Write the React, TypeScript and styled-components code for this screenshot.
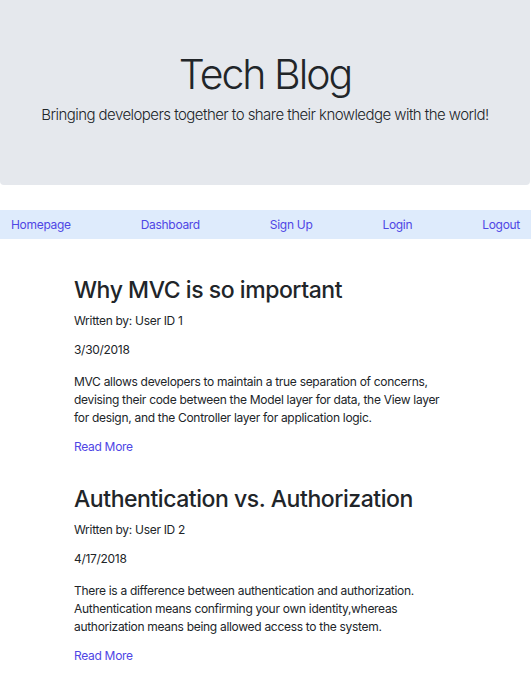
import React from "react";
import styled, { createGlobalStyle } from "styled-components";

const Global = createGlobalStyle`
  body {
    margin: 0;
    background: #ffffff;
    font-family: Inter, "Noto Sans", sans-serif;
    color: #212529;
  }
`;

const Jumbotron = styled.header`
  height: 185px;
  box-sizing: border-box;
  background: #e5e8ed;
  border-radius: 0 0 4px 4px;
  margin-right: 1px;
  display: flex;
  flex-direction: column;
  align-items: center;
  padding-top: 50px;
`;

const Title = styled.h1`
  margin: 0;
  font-size: 41px;
  font-weight: 300;
  line-height: 48px;
  letter-spacing: -2px;
  color: #212529;
`;

const Lead = styled.p`
  margin: 6px 0 0;
  font-size: 15px;
  font-weight: 300;
  line-height: 22px;
  letter-spacing: -0.55px;
  color: #212529;
`;

const Nav = styled.nav`
  margin-top: 25px;
  height: 29px;
  background: #deebfc;
  display: flex;
  align-items: center;
  justify-content: space-between;
  padding: 0 11px;
`;

const NavLink = styled.a`
  font-size: 12px;
  letter-spacing: -0.3px;
  color: #4f46e5;
  text-decoration: none;
`;

const Main = styled.main`
  width: 383px;
  margin: 0 auto;
  padding-top: 37px;
`;

const Post = styled.article`
  margin-bottom: 29px;
`;

const PostTitle = styled.h2`
  margin: 0 0 7px;
  font-size: 23px;
  font-weight: 500;
  line-height: 29px;
  letter-spacing: -0.45px;
`;

const Meta = styled.p<{ $gap: number }>`
  margin: 0 0 ${(p) => p.$gap}px;
  font-size: 12px;
  letter-spacing: -0.3px;
  line-height: 18px;
`;

const Body = styled.p`
  max-width: 372px;
  margin: 0 0 11px;
  font-size: 12px;
  letter-spacing: -0.3px;
  line-height: 18px;
`;

const ReadMore = styled.a`
  display: block;
  font-size: 12px;
  letter-spacing: -0.3px;
  line-height: 18px;
  color: #4f46e5;
  text-decoration: none;
`;

const posts = [
  {
    title: "Why MVC is so important",
    user: 1,
    date: "3/30/2018",
    body: "MVC allows developers to maintain a true separation of concerns, devising their code between the Model layer for data, the View layer for design, and the Controller layer for application logic.",
  },
  {
    title: "Authentication vs. Authorization",
    user: 2,
    date: "4/17/2018",
    body: "There is a difference between authentication and authorization. Authentication means confirming your own identity,whereas authorization means being allowed access to the system.",
  },
];

export default function App() {
  return (
    <>
      <Global />
      <Jumbotron>
        <Title>Tech Blog</Title>
        <Lead>Bringing developers together to share their knowledge with the world!</Lead>
      </Jumbotron>
      <Nav>
        <NavLink href="#">Homepage</NavLink>
        <NavLink href="#">Dashboard</NavLink>
        <NavLink href="#">Sign Up</NavLink>
        <NavLink href="#">Login</NavLink>
        <NavLink href="#">Logout</NavLink>
      </Nav>
      <Main>
        {posts.map((p) => (
          <Post key={p.title}>
            <PostTitle>{p.title}</PostTitle>
            <Meta $gap={11}>Written by: User ID {p.user}</Meta>
            <Meta $gap={14}>{p.date}</Meta>
            <Body>{p.body}</Body>
            <ReadMore href="#">Read More</ReadMore>
          </Post>
        ))}
      </Main>
    </>
  );
}
